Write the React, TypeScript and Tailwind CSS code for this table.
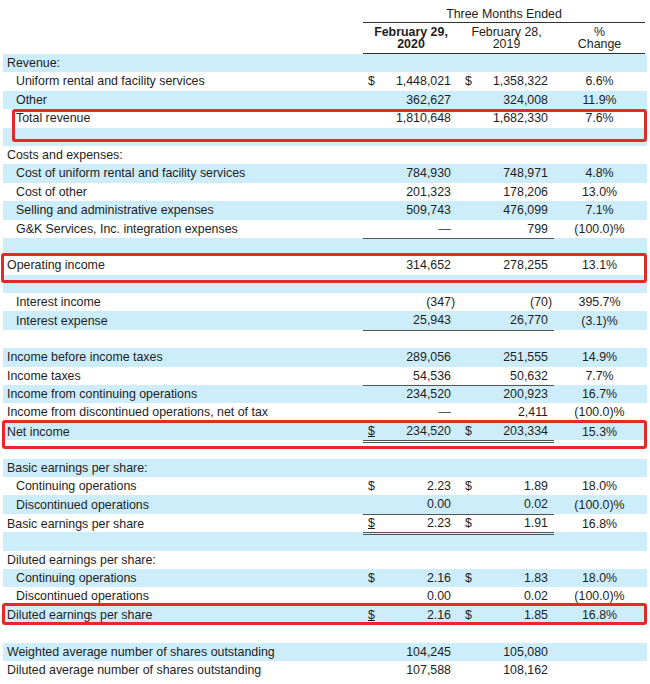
import * as React from "react"

type Line = "single" | "double"

type Row = {
  label?: string
  indent?: boolean
  d1?: boolean
  v1?: string
  d2?: boolean
  v2?: string
  pct?: string
  line?: Line
  uDollar?: boolean
}

const rows: Row[] = [
  { label: "Revenue:" },
  { label: "Uniform rental and facility services", indent: true, d1: true, v1: "1,448,021", d2: true, v2: "1,358,322", pct: "6.6%" },
  { label: "Other", indent: true, v1: "362,627", v2: "324,008", pct: "11.9%", line: "single" },
  { label: "Total revenue", indent: true, v1: "1,810,648", v2: "1,682,330", pct: "7.6%" },
  {},
  { label: "Costs and expenses:" },
  { label: "Cost of uniform rental and facility services", indent: true, v1: "784,930", v2: "748,971", pct: "4.8%" },
  { label: "Cost of other", indent: true, v1: "201,323", v2: "178,206", pct: "13.0%" },
  { label: "Selling and administrative expenses", indent: true, v1: "509,743", v2: "476,099", pct: "7.1%" },
  { label: "G&K Services, Inc. integration expenses", indent: true, v1: "—", v2: "799", pct: "(100.0)%", line: "single" },
  {},
  { label: "Operating income", v1: "314,652", v2: "278,255", pct: "13.1%" },
  {},
  { label: "Interest income", indent: true, v1: "(347)", v2: "(70)", pct: "395.7%" },
  { label: "Interest expense", indent: true, v1: "25,943", v2: "26,770", pct: "(3.1)%", line: "single" },
  {},
  { label: "Income before income taxes", v1: "289,056", v2: "251,555", pct: "14.9%" },
  { label: "Income taxes", v1: "54,536", v2: "50,632", pct: "7.7%", line: "single" },
  { label: "Income from continuing operations", v1: "234,520", v2: "200,923", pct: "16.7%" },
  { label: "Income from discontinued operations, net of tax", v1: "—", v2: "2,411", pct: "(100.0)%" },
  { label: "Net income", d1: true, v1: "234,520", d2: true, v2: "203,334", pct: "15.3%", line: "double", uDollar: true },
  {},
  { label: "Basic earnings per share:" },
  { label: "Continuing operations", indent: true, d1: true, v1: "2.23", d2: true, v2: "1.89", pct: "18.0%" },
  { label: "Discontinued operations", indent: true, v1: "0.00", v2: "0.02", pct: "(100.0)%", line: "single" },
  { label: "Basic earnings per share", d1: true, v1: "2.23", d2: true, v2: "1.91", pct: "16.8%", line: "double", uDollar: true },
  {},
  { label: "Diluted earnings per share:" },
  { label: "Continuing operations", indent: true, d1: true, v1: "2.16", d2: true, v2: "1.83", pct: "18.0%" },
  { label: "Discontinued operations", indent: true, v1: "0.00", v2: "0.02", pct: "(100.0)%" },
  { label: "Diluted earnings per share", d1: true, v1: "2.16", d2: true, v2: "1.85", pct: "16.8%", line: "single", uDollar: true },
  {},
  { label: "Weighted average number of shares outstanding", v1: "104,245", v2: "105,080" },
  { label: "Diluted average number of shares outstanding", v1: "107,588", v2: "108,162" },
]

function Amount({ value }: { value?: string }) {
  if (!value) return null
  if (value.endsWith(")")) {
    return (
      <span>
        {value.slice(0, -1)}
        <span className="inline-block w-0">)</span>
      </span>
    )
  }
  if (value === "—") return <span className="text-[#555]">—</span>
  return <span>{value}</span>
}

function lineClass(line?: Line) {
  if (line === "double") return "border-b-[3px] border-double border-[#555]"
  if (line === "single") return "border-b border-[#555]"
  return ""
}

function DataRow({ row, striped }: { row: Row; striped: boolean }) {
  const underline = lineClass(row.line)
  return (
    <div className={`grid h-[18.4px] grid-cols-[360px_96px_95px_91px] ${striped ? "bg-[#cdedfb]" : ""}`}>
      <div className={`flex items-center whitespace-nowrap ${row.indent ? "pl-[13px]" : "pl-[4px]"}`}>{row.label}</div>
      <div className={`flex items-center justify-between pl-[5px] pr-[8px] ${underline}`}>
        <span className={row.uDollar ? "underline underline-offset-1" : ""}>{row.d1 ? "$" : ""}</span>
        <Amount value={row.v1} />
      </div>
      <div className={`flex items-center justify-between pl-[6px] pr-[6px] ${underline}`}>
        <span>{row.d2 ? "$" : ""}</span>
        <Amount value={row.v2} />
      </div>
      <div className="flex items-center justify-center">{row.pct}</div>
    </div>
  )
}

// red annotation frames drawn over the table
const boxes = [
  "left-[12px] top-[109px] h-[33px] w-[635px]",
  "left-[1px] top-[253px] h-[30px] w-[646px]",
  "left-[2px] top-[420px] h-[29px] w-[645px]",
  "left-[2px] top-[603px] h-[22px] w-[645px]",
]

export default function App() {
  return (
    <div
      className="relative h-[684px] w-[650px] bg-white px-[3px] text-[12.4px] text-[#1e1e1e]"
      style={{ fontFamily: '"Liberation Sans", Arial, sans-serif' }}
    >
      <div className="grid grid-cols-[360px_282px]">
        <div />
        <div className="h-[23px] border-b border-[#333] pt-[7px] text-center leading-[14px]">Three Months Ended</div>
      </div>
      <div className="grid h-[31px] grid-cols-[360px_96px_95px_91px] leading-[12.5px]">
        <div />
        <div className="border-b border-[#333] pt-[2.5px] text-center font-bold">
          February 29,
          <br />
          2020
        </div>
        <div className="border-b border-[#333] pt-[2.5px] text-center">
          February 28,
          <br />
          2019
        </div>
        <div className="border-b border-[#333] pt-[2.5px] text-center">
          %
          <br />
          Change
        </div>
      </div>
      {rows.map((row, i) => (
        <DataRow key={i} row={row} striped={i % 2 === 0} />
      ))}
      {boxes.map((pos) => (
        <div key={pos} className={`pointer-events-none absolute rounded-[3px] border-[3px] border-[#e42a24] ${pos}`} />
      ))}
    </div>
  )
}
